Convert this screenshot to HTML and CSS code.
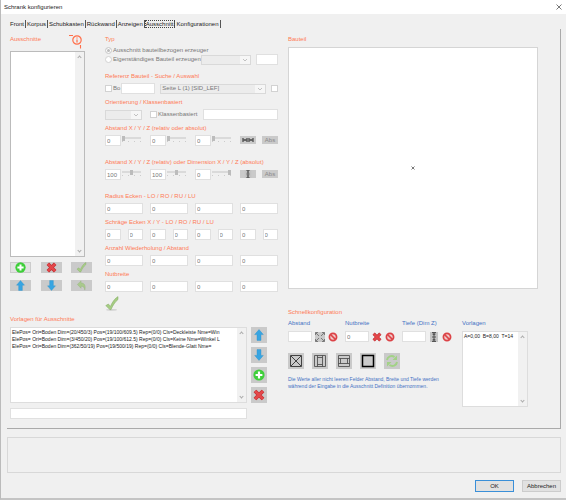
FILE: index.html
```
<!DOCTYPE html>
<html lang="de">
<head>
    <meta charset="utf-8">
    <title>Schrank konfigurieren</title>
    <link rel="stylesheet" href="styles.css">
</head>
<body>
    <!-- shared icons -->
    <svg class="defs" width="0" height="0">
        <symbol id="i-plus" viewBox="0 0 12 12">
            <circle cx="6" cy="6" r="5.6" fill="#3fcf3a"/>
            <path d="M6 2.6v6.8M2.6 6h6.8" stroke="#fff" stroke-width="2.2"/>
        </symbol>
        <symbol id="i-cross" viewBox="0 0 12 12">
            <path d="M2 2l8 8M10 2l-8 8" stroke="#b92c30" stroke-width="3.8"/>
            <path d="M2 2l8 8M10 2l-8 8" stroke="#e4474a" stroke-width="2.6"/>
        </symbol>
        <symbol id="i-up" viewBox="0 0 12 12">
            <path d="M6 .6l4.3 5H8v5.8H4V5.6H1.7z" fill="#37a5e2" stroke="#2a8fcb" stroke-width=".4"/>
        </symbol>
        <symbol id="i-down" viewBox="0 0 12 12">
            <path d="M6 11.4l4.3-5H8V.6H4v5.8H1.7z" fill="#37a5e2" stroke="#2a8fcb" stroke-width=".4"/>
        </symbol>
        <symbol id="i-check" viewBox="0 0 14 15">
            <ellipse cx="6.5" cy="13.8" rx="5.5" ry=".9" fill="#cfcfcf"/>
            <path d="M.8 9.6L3.4 8l2 2.4C7 6.6 9.6 2.6 13 .6v2.9C10 6 7.8 9.5 6 13.6H4.8z" fill="#a6cd84" stroke="#80a860" stroke-width=".5"/>
        </symbol>
        <symbol id="i-undo" viewBox="0 0 12 12">
            <path d="M1.5 4.8L5.5 1v2.2C9 3.2 11 6 9.6 11 9.2 8 8 6.8 5.5 6.8V9z" fill="#a9c98d" stroke="#8fb074" stroke-width=".4"/>
        </symbol>
        <symbol id="i-ban" viewBox="0 0 10 10">
            <circle cx="5" cy="5" r="3.6" fill="#f0c8c8" stroke="#dc4347" stroke-width="1.7"/>
            <path d="M2.5 2.5l5 5" stroke="#dc4347" stroke-width="1.7"/>
        </symbol>
        <symbol id="i-vert" viewBox="0 0 8 10">
            <rect width="8" height="10" fill="#c4c4c4"/>
            <path d="M2 .6h4M2 9.4h4M2 5h4M4 1v8" stroke="#555" stroke-width="1.1"/>
            <path d="M2.2 3L4 1.2 5.8 3zM2.2 7L4 8.8 5.8 7z" fill="#555"/>
        </symbol>
    </svg>

    <div class="window">
        <header class="titlebar">
            <h1>Schrank konfigurieren</h1>
            <button type="button" class="close" aria-label="Schließen">
                <svg width="6" height="6" viewBox="0 0 6 6"><path d="M.5.5l5 5M5.5.5l-5 5" stroke="#555" stroke-width=".8"/></svg>
            </button>
        </header>

        <nav class="tabs">
            <button type="button">Front</button>
            <button type="button">Korpus</button>
            <button type="button">Schubkasten</button>
            <button type="button">Rückwand</button>
            <button type="button">Anzeigen</button>
            <button type="button" class="active">Ausschnitt</button>
            <button type="button">Konfigurationen</button>
        </nav>

        <main class="panel">
            <div class="left">
                <div class="top">
                    <section class="cutouts">
                        <div class="cutouts-head">
                            <h2>Ausschnitte</h2>
                            <svg width="14" height="15" viewBox="0 0 14 15" fill="none" stroke="#ff6f4a">
                                <circle cx="8" cy="6" r="4.2" stroke-width="1.2"/>
                                <path d="M8 5.4v3M8 3.4v1" stroke-width="1.2"/>
                                <path d="M0 1.5h4M11.5 11v3.5" stroke-width="1.1"/>
                            </svg>
                        </div>
                        <div class="listbox">
                            <ul></ul>
                            <div class="scroll"><i class="chev up"></i><i class="chev"></i></div>
                        </div>
                        <div class="tools">
                            <button type="button" class="light" aria-label="Neu"><svg><use href="#i-plus"/></svg></button>
                            <button type="button" aria-label="Löschen"><svg><use href="#i-cross"/></svg></button>
                            <button type="button" aria-label="Übernehmen"><svg><use href="#i-check"/></svg></button>
                            <button type="button" aria-label="Nach oben"><svg><use href="#i-up"/></svg></button>
                            <button type="button" aria-label="Nach unten"><svg><use href="#i-down"/></svg></button>
                            <button type="button" aria-label="Zurück"><svg><use href="#i-undo"/></svg></button>
                        </div>
                    </section>

                    <form class="details">
                        <h2>Typ</h2>
                        <div class="types">
                            <label><input type="radio" name="typ" checked disabled>Ausschnitt bauteilbezogen erzeuger</label>
                            <div class="row">
                                <label><input type="radio" name="typ" disabled>Eigenständiges Bauteil erzeugen</label>
                                <select class="type-select" aria-label="Bauteiltyp" disabled><option></option></select>
                                <input type="text" class="type-text" aria-label="Bauteilname">
                            </div>
                        </div>

                        <h2>Referenz Bauteil - Suche / Auswahl</h2>
                        <div class="row ref">
                            <label><input type="checkbox" disabled>Bo</label>
                            <input type="text" class="ref-text" aria-label="Suche">
                            <select aria-label="Auswahl" disabled><option>Seite L (1) [SID_LEF]</option></select>
                            <input type="checkbox" aria-label="Auswahl fixieren" disabled>
                        </div>

                        <h2>Orientierung / Klassenbasiert</h2>
                        <div class="row">
                            <select class="orient" aria-label="Orientierung" disabled><option></option></select>
                            <label class="class-label"><input type="checkbox" disabled>Klassenbasiert</label>
                            <input type="text" class="class-text" aria-label="Klasse">
                        </div>

                        <h2>Abstand X / Y / Z (relativ oder absolut)</h2>
                        <div class="cols4 sliders">
                            <div class="pair"><input type="text" value="0" aria-label="Abstand X"><input type="range" value="0" aria-label="X"></div>
                            <div class="pair"><input type="text" value="0" aria-label="Abstand Y"><input type="range" value="0" aria-label="Y"></div>
                            <div class="pair"><input type="text" value="0" aria-label="Abstand Z"><input type="range" value="0" aria-label="Z"></div>
                            <div class="pair buttons">
                                <button type="button" aria-label="Horizontal"><svg class="wide" viewBox="0 0 12 6"><path d="M1 1v4M5 1v4M7 1v4M11 1v4M1 3h4M7 3h4" stroke="#444" stroke-width="1.2"/><path d="M2 3l1-1 1 1-1 1zM8 3l1-1 1 1-1 1z" fill="#444"/></svg></button>
                                <button type="button" disabled>Abs</button>
                            </div>
                        </div>

                        <h2>Abstand X / Y / Z (relativ) oder Dimension X / Y / Z (absolut)</h2>
                        <div class="cols4 sliders">
                            <div class="pair"><input type="text" value="100" aria-label="Dimension X"><input type="range" value="50" aria-label="X"></div>
                            <div class="pair"><input type="text" value="100" aria-label="Dimension Y"><input type="range" value="50" aria-label="Y"></div>
                            <div class="pair"><input type="text" value="0" aria-label="Dimension Z"><input type="range" value="100" aria-label="Z"></div>
                            <div class="pair buttons">
                                <button type="button" aria-label="Vertikal"><svg><use href="#i-vert"/></svg></button>
                                <button type="button" disabled>Abs</button>
                            </div>
                        </div>

                        <h2>Radius Ecken - LO / RO / RU / LU</h2>
                        <div class="cols4">
                            <input type="text" value="0" aria-label="Radius LO">
                            <input type="text" value="0" aria-label="Radius RO">
                            <input type="text" value="0" aria-label="Radius RU">
                            <input type="text" value="0" aria-label="Radius LU">
                        </div>

                        <h2>Schräge Ecken X / Y - LO / RO / RU / LU</h2>
                        <div class="cols8">
                            <input type="text" value="0" aria-label="LO X">
                            <input type="text" value="0" aria-label="LO Y">
                            <input type="text" value="0" aria-label="RO X">
                            <input type="text" value="0" aria-label="RO Y">
                            <input type="text" value="0" aria-label="RU X">
                            <input type="text" value="0" aria-label="RU Y">
                            <input type="text" value="0" aria-label="LU X">
                            <input type="text" value="0" aria-label="LU Y">
                        </div>

                        <h2>Anzahl Wiederholung / Abstand</h2>
                        <div class="cols4">
                            <input type="text" value="0" aria-label="Anzahl 1">
                            <input type="text" value="0" aria-label="Abstand 1">
                            <input type="text" value="0" aria-label="Anzahl 2">
                            <input type="text" value="0" aria-label="Abstand 2">
                        </div>

                        <h2>Nutbreite</h2>
                        <div class="cols4">
                            <input type="text" value="0" aria-label="Nutbreite 1">
                            <input type="text" value="0" aria-label="Nutbreite 2">
                            <input type="text" value="0" aria-label="Nutbreite 3">
                            <input type="text" value="0" aria-label="Nutbreite 4">
                        </div>
                        <svg class="ok-mark" width="14" height="15"><use href="#i-check"/></svg>
                    </form>
                </div>

                <section class="templates">
                    <h2>Vorlagen für Ausschnitte</h2>
                    <div class="templates-body">
                        <div class="templates-main">
                            <div class="listbox">
                                <ul>
                                    <li>ElePos= Ori=Boden Dim=(20/450/3) Pos=(19/100/609.5) Rep=(0/0) Cls=Deckleiste Nme=Win</li>
                                    <li>ElePos= Ori=Boden Dim=(3/450/20) Pos=(19/100/612.5) Rep=(0/0) Cls=Keine Nme=Winkel L</li>
                                    <li>ElePos= Ori=Boden Dim=(362/50/19) Pos=(19/500/19) Rep=(0/0) Cls=Blende-Glatt Nme=</li>
                                </ul>
                                <div class="scroll"><i class="chev up"></i><i class="chev"></i></div>
                            </div>
                            <input type="text" aria-label="Name der Vorlage">
                        </div>
                        <div class="side">
                            <button type="button" aria-label="Nach oben"><svg><use href="#i-up"/></svg></button>
                            <button type="button" aria-label="Nach unten"><svg><use href="#i-down"/></svg></button>
                            <button type="button" aria-label="Neu"><svg><use href="#i-plus"/></svg></button>
                            <button type="button" aria-label="Löschen"><svg><use href="#i-cross"/></svg></button>
                        </div>
                    </div>
                </section>
            </div>

            <div class="right">
                <h2>Bauteil</h2>
                <div class="preview">
                    <svg width="4" height="4" viewBox="0 0 4 4"><path d="M.5.5l3 3M3.5.5l-3 3" stroke="#555" stroke-width=".8"/></svg>
                </div>

                <h2>Schnellkonfiguration</h2>
                <div class="quick">
                    <div class="quick-main">
                        <div class="quick-fields">
                            <div>
                                <label for="qAbstand">Abstand</label>
                                <div class="quick-row">
                                    <input type="text" id="qAbstand">
                                    <svg width="10" height="10" viewBox="0 0 10 10"><rect width="10" height="10" fill="#c8c8c8"/><path d="M.5 3V.5H3M7 .5h2.5V3M9.5 7v2.5H7M3 9.5H.5V7M1 1l3 3M9 1L6 4M9 9L6 6M1 9l3-3" fill="none" stroke="#666" stroke-width=".8"/></svg>
                                    <svg width="10" height="10"><use href="#i-ban"/></svg>
                                </div>
                            </div>
                            <div>
                                <label for="qNutbreite">Nutbreite</label>
                                <div class="quick-row">
                                    <input type="text" id="qNutbreite" value="0">
                                    <svg width="10" height="10"><use href="#i-cross"/></svg>
                                    <svg width="10" height="10"><use href="#i-ban"/></svg>
                                </div>
                            </div>
                            <div>
                                <label for="qTiefe">Tiefe (Dim Z)</label>
                                <div class="quick-row">
                                    <input type="text" id="qTiefe">
                                    <svg width="10" height="10"><use href="#i-vert"/></svg>
                                    <svg width="10" height="10"><use href="#i-ban"/></svg>
                                </div>
                            </div>
                        </div>
                        <div class="shapes">
                            <button type="button" aria-label="Gesamt"><svg viewBox="0 0 16 16"><path d="M2.5 2.5h11v11h-11zM3 3l10 10M13 3L3 13" fill="none" stroke="#333" stroke-width=".9"/></svg></button>
                            <button type="button" aria-label="Seiten"><svg viewBox="0 0 16 16"><path d="M2.5 2.500h11v11h-11zM5.500 2.500v11M10.500 2.500v11M5.500 4.500h5M5.500 11.500h5" fill="none" stroke="#444" stroke-width=".8"/></svg></button>
                            <button type="button" aria-label="Böden"><svg viewBox="0 0 16 16"><path d="M2.5 2.500h11v11h-11zM2.500 5.500h11M2.500 10.500h11M4.500 5.500v5M11.500 5.500v5" fill="none" stroke="#444" stroke-width=".8"/></svg></button>
                            <button type="button" aria-label="Rahmen"><svg viewBox="0 0 16 16"><path d="M2.5 2.5h11v11h-11z" fill="none" stroke="#000" stroke-width="1.5"/></svg></button>
                            <button type="button" aria-label="Aktualisieren"><svg viewBox="0 0 16 16"><path d="M3 7C3.5 3.5 7.5 2 10.5 4M13 9c-.5 3.5-4.5 5-7.5 3" fill="none" stroke="#a2d286" stroke-width="2"/><path d="M13 2.500V7H8.500zM3 13.500V9h4.500z" fill="#a2d286"/></svg></button>
                        </div>
                        <p>Die Werte aller nicht leeren Felder Abstand, Breite und Tiefe werden<br>während der Eingabe in die Ausschnitt Definition übernommen.</p>
                    </div>
                    <div class="quick-templates">
                        <h3>Vorlagen</h3>
                        <div class="listbox">
                            <ul><li>A=0,00&nbsp; B=8,00&nbsp; T=14</li></ul>
                            <div class="scroll"><i class="chev up"></i><i class="chev"></i></div>
                        </div>
                    </div>
                </div>
            </div>
        </main>

        <div class="message"></div>

        <footer>
            <button type="button" class="primary">OK</button>
            <button type="button">Abbrechen</button>
        </footer>
    </div>
</body>
</html>
```
FILE: styles.css
```
* {
    box-sizing: border-box;
}

body {
    margin: 0;
    background: #c4c4c4;
    font-family: "Liberation Sans", Arial, sans-serif;
    font-size: 6px;
    line-height: 7px;
    color: #222;
}

button,
input,
select {
    font: inherit;
    margin: 0;
    padding: 0;
    min-width: 0;
}

svg {
    display: block;
}

.defs {
    position: absolute;
}

.window {
    min-height: 100vh;
    background: #f0f0f0;
    border-left: 1px solid #bbb;
    border-bottom: 2px solid #c4c4c4;
}

.titlebar {
    display: flex;
    justify-content: space-between;
    align-items: center;
    height: 14px;
    padding: 0 4px 0 3px;
    background: #fff;
}

.titlebar h1 {
    margin: 0;
    font-size: 6px;
    font-weight: normal;
}

.close {
    border: none;
    background: none;
}

/* tabs */

.tabs {
    display: flex;
    height: 15px;
    padding: 6px 0 0 8px;
}

.tabs button {
    height: 8px;
    padding: 0 1px;
    border: none;
    border-right: 1px solid #555;
    background: none;
    color: #222;
}

.tabs .active {
    outline: 1px dotted #444;
    outline-offset: -1px;
}

.panel {
    display: grid;
    grid-template-columns: minmax(0, 268fr) minmax(0, 250fr);
    gap: 10px;
    margin: 0 5px 0 6px;
    padding: 5px 22px 9px 3px;
    border-right: 1px solid #aaa;
    border-bottom: 1px solid #aaa;
}

h2 {
    margin: 0;
    height: 10px;
    font-size: 6px;
    font-weight: normal;
    line-height: 10px;
    color: #ff7a55;
    white-space: nowrap;
}

input[type="text"] {
    height: 11px;
    padding: 0 1px;
    border: 1px solid #e0e0e0;
    background: #fff;
    color: #777;
}

select {
    height: 10px;
    padding: 0 12px 0 1px;
    border: 1px solid #d9d9d9;
    border-radius: 0;
    appearance: none;
    background: #ececec url("data:image/svg+xml,%3Csvg xmlns='http://www.w3.org/2000/svg' width='10' height='8'%3E%3Crect width='10' height='8' fill='%23f6f6f6'/%3E%3Cpath d='M3 3l2 2 2-2' fill='none' stroke='%23aaa' stroke-width='.7'/%3E%3C/svg%3E") no-repeat right center;
    color: #777;
    opacity: 1;
}

input[type="radio"],
input[type="checkbox"] {
    flex: none;
    appearance: none;
    width: 7px;
    height: 7px;
    border: 1px solid #d2d2d2;
    background: #fff;
}

input[type="radio"] {
    border-radius: 50%;
}

input[type="radio"]:checked {
    background: #bbb;
    box-shadow: inset 0 0 0 1px #fff;
}

.details label {
    display: flex;
    align-items: center;
    gap: 1px;
    color: #777;
    white-space: nowrap;
}

.row {
    display: flex;
    align-items: center;
    height: 11px;
}

/* list boxes */

.listbox {
    display: flex;
    border: 1px solid #ddd;
    background: #fff;
    font-size: 5px;
}

.listbox ul {
    flex: 1;
    min-width: 0;
    margin: 0;
    padding: 1px 0 0 1px;
    overflow: hidden;
    list-style: none;
    white-space: nowrap;
}

.scroll {
    display: flex;
    flex: none;
    flex-direction: column;
    justify-content: space-between;
    align-items: center;
    width: 9px;
    padding: 4px 0;
    background: #f1f1f1;
}

.chev {
    width: 3px;
    height: 3px;
    border: solid #aaa;
    border-width: 0 1px 1px 0;
    transform: rotate(45deg);
}

.chev.up {
    transform: rotate(225deg);
}

/* left column */

.top {
    display: grid;
    grid-template-columns: 82px minmax(0, 1fr);
    gap: 13px;
}

.cutouts-head {
    display: flex;
    justify-content: space-between;
    width: 73px;
    height: 17px;
}

.cutouts .listbox {
    width: 75px;
    height: 206px;
    border-color: #bbb;
}

.tools {
    display: grid;
    grid-template-columns: 21px 21px 21px;
    justify-content: space-between;
    gap: 7px 0;
    margin-top: 5px;
}

.tools button,
.side button,
.shapes button,
.buttons button {
    display: flex;
    align-items: center;
    justify-content: center;
    border: none;
    background: #cacaca;
    color: #888;
}

.tools button {
    height: 11px;
}

.tools .light {
    background: #e2e2e2;
    border: 1px solid #ccc;
}

.tools svg {
    width: 11px;
    height: 11px;
}

.types {
    height: 27px;
    padding-top: 3px;
}

.type-select {
    width: 50px;
    margin-left: auto;
}

.type-text {
    width: 22px;
    margin-left: 5px;
}

.details h2 + .row,
.cols4,
.cols8 {
    margin: 2px 0 3px;
}

.ref-text {
    width: 34px;
    margin-left: 1px;
}

.ref select {
    flex: 1;
    margin: 0 5px;
}

.orient {
    width: 37px;
}

.class-label {
    margin-left: 8px;
}

.class-text {
    width: 75px;
    margin-left: auto;
}

.cols4,
.cols8 {
    display: grid;
    grid-template-columns: repeat(4, minmax(0, 1fr));
    gap: 7px;
}

.cols8 {
    grid-template-columns: repeat(8, minmax(0, 1fr));
}

.cols4 > input,
.cols8 > input {
    width: 100%;
}

.details .sliders {
    margin-bottom: 11px;
}

.pair {
    display: flex;
    gap: 1px;
}

.pair input[type="text"] {
    width: 16px;
}

.buttons {
    justify-content: space-between;
}

.buttons button {
    width: 16px;
    height: 8px;
    margin-top: 1px;
}

.buttons svg {
    width: 8px;
    height: 8px;
}

.buttons .wide {
    width: 12px;
}

input[type="range"] {
    appearance: none;
    width: 19px;
    height: 7px;
    background: linear-gradient(#dadada, #dadada) 0 2px / 100% 2px no-repeat,
        repeating-linear-gradient(90deg, #ccc 0 1px, transparent 1px 6px) 0 6px / 100% 1px no-repeat;
}

input[type="range"]::-webkit-slider-thumb {
    appearance: none;
    width: 3px;
    height: 5px;
    background: #bcbcbc;
}

.ok-mark {
    margin-top: 4px;
}

.templates {
    margin-top: 3px;
}

.templates-body {
    display: flex;
    gap: 4px;
    margin-top: 3px;
    padding-right: 11px;
}

.templates-main {
    flex: 1;
    min-width: 0;
}

.templates .listbox {
    height: 76px;
}

.templates-main input {
    width: 100%;
    margin-top: 5px;
}

.side {
    display: flex;
    flex-direction: column;
    gap: 4px;
}

.side button,
.shapes button {
    width: 16px;
    height: 16px;
}

.side svg {
    width: 12px;
    height: 12px;
}

/* right column */

.preview {
    display: flex;
    align-items: center;
    justify-content: center;
    height: 242px;
    margin: 3px 0 18px;
    border: 1px solid #d5d5d5;
    background: #fff;
}

.quick {
    display: flex;
    justify-content: space-between;
    padding-right: 10px;
}

.quick label,
.quick h3,
.quick p {
    margin: 0;
    font-size: 6px;
    font-weight: normal;
    color: #4472c4;
}

.quick p {
    font-size: 5px;
}

.quick label,
.quick h3 {
    display: block;
    height: 14px;
    padding-top: 3px;
}

.quick-main {
    width: 171px;
}

.quick-fields {
    display: flex;
    justify-content: space-between;
    padding-right: 7px;
}

.quick-row {
    display: flex;
    align-items: center;
    gap: 3px;
}

.quick-row input {
    width: 24px;
}

.shapes {
    display: flex;
    gap: 8px;
    margin: 11px 0 7px;
}

.shapes svg {
    width: 16px;
    height: 16px;
}

.quick-templates {
    width: 66px;
}

.quick-templates .listbox {
    height: 76px;
}

.message {
    height: 36px;
    margin: 8px 5px 0 6px;
    border: 1px solid #d8d8d8;
}

footer {
    display: flex;
    justify-content: flex-end;
    gap: 8px;
    padding: 7px 5px 6px;
}

footer button {
    width: 39px;
    height: 12px;
    border: 1px solid #ccc;
    background: #e1e1e1;
    color: #222;
}

footer .primary {
    border-color: #3a8fd8;
}
```
